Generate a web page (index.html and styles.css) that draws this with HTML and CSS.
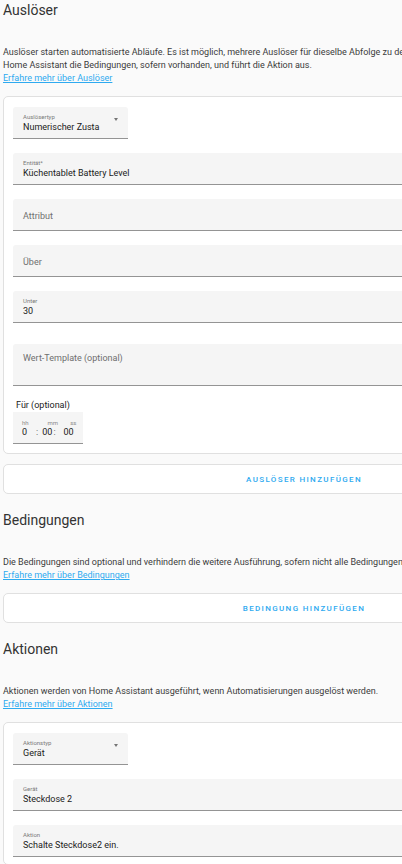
FILE: index.html
```html
<!DOCTYPE html>
<html lang="de">
<head>
<meta charset="utf-8">
<title>Automation</title>
<link rel="stylesheet" href="styles.css">
</head>
<body>
<div class="page">
  <section class="section first">
    <h2 class="title">Auslöser</h2>
    <p class="intro">Auslöser starten automatisierte Abläufe. Es ist möglich, mehrere Auslöser für dieselbe Abfolge zu definieren. Wenn ein Auslöser auslöst, überprüft<br>Home Assistant die Bedingungen, sofern vorhanden, und führt die Aktion aus.<br><a href="#" class="link">Erfahre mehr über Auslöser</a></p>
    <div class="card">
      <div class="field select">
        <div class="select-text">
          <span class="label">Auslösertyp</span>
          <span class="value">Numerischer Zusta</span>
        </div>
        <span class="arrow"></span>
      </div>
      <div class="field">
        <span class="label">Entität*</span>
        <span class="value">Küchentablet Battery Level</span>
      </div>
      <div class="field">
        <span class="ph">Attribut</span>
      </div>
      <div class="field">
        <span class="ph">Über</span>
      </div>
      <div class="field">
        <span class="label">Unter</span>
        <span class="value">30</span>
      </div>
      <div class="field area">
        <span class="ph">Wert-Template (optional)</span>
      </div>
      <div class="duration-block">
        <div class="dur-title">Für (optional)</div>
        <div class="duration">
          <div class="dur-row units">
            <span class="du hh">hh</span><span class="du mm">mm</span><span class="du ss">ss</span>
          </div>
          <div class="dur-row vals">
            <span class="dv h">0</span><span class="dc c1">:</span><span class="dv m">00</span><span class="dc c2">:</span><span class="dv s">00</span>
          </div>
        </div>
      </div>
    </div>
    <div class="card button-card"><span class="btn">Auslöser hinzufügen</span></div>
  </section>

  <section class="section">
    <h2 class="title">Bedingungen</h2>
    <p class="intro">Die Bedingungen sind optional und verhindern die weitere Ausführung, sofern nicht alle Bedingungen erfüllt sind.<br><a href="#" class="link">Erfahre mehr über Bedingungen</a></p>
    <div class="card button-card"><span class="btn">Bedingung hinzufügen</span></div>
  </section>

  <section class="section">
    <h2 class="title">Aktionen</h2>
    <p class="intro">Aktionen werden von Home Assistant ausgeführt, wenn Automatisierungen ausgelöst werden.<br><a href="#" class="link">Erfahre mehr über Aktionen</a></p>
    <div class="card last">
      <div class="field select">
        <div class="select-text">
          <span class="label">Aktionstyp</span>
          <span class="value">Gerät</span>
        </div>
        <span class="arrow"></span>
      </div>
      <div class="field">
        <span class="label">Gerät</span>
        <span class="value">Steckdose 2</span>
      </div>
      <div class="field">
        <span class="label">Aktion</span>
        <span class="value">Schalte Steckdose2 ein.</span>
      </div>
    </div>
  </section>
</div>
</body>
</html>
```

FILE: styles.css
```css
html, body {
  margin: 0;
  padding: 0;
  background: #fafafa;
  overflow: hidden;
}
body {
  font-family: Roboto, "Liberation Sans", sans-serif;
  color: #212121;
}
.page {
  width: 602px;
  padding-left: 3px;
}
.section {
  padding-top: 16px;
}
.section.first {
  padding-top: 0;
}
.title {
  margin: 0;
  font-size: 14px;
  line-height: 20px;
  font-weight: 400;
  color: #333;
}
.intro {
  margin: 26px 0 11px;
  font-size: 9px;
  line-height: 13px;
  white-space: nowrap;
  color: #3a3a3a;
}
.link {
  color: #2eaaf0;
  text-decoration: underline;
  text-underline-offset: 1px;
}
.card {
  background: #fff;
  border: 1px solid #e0e0e0;
  border-radius: 5px;
  box-sizing: border-box;
  padding: 10px 9px 9px;
  display: flex;
  flex-direction: column;
  gap: 14px;
}
.card.last {
  padding-bottom: 7px;
}
.field {
  background: #f5f5f5;
  border-bottom: 1px solid #949494;
  border-radius: 3px 3px 0 0;
  height: 32px;
  box-sizing: border-box;
  padding: 0 10px;
  display: flex;
  flex-direction: column;
  justify-content: center;
}
.label {
  font-size: 6px;
  line-height: 8px;
  color: #7a7a7a;
}
.value {
  font-size: 9px;
  line-height: 12px;
  color: #212121;
}
.ph {
  font-size: 9px;
  line-height: 12px;
  color: #6f6f6f;
  padding-top: 2px;
}
.field.select {
  width: 115px;
  flex-direction: row;
  align-items: center;
  justify-content: space-between;
  padding-right: 10px;
}
.select-text {
  display: flex;
  flex-direction: column;
  padding-top: 1px;
}
.arrow {
  width: 0;
  height: 0;
  border-left: 2.5px solid transparent;
  border-right: 2.5px solid transparent;
  border-top: 3px solid #757575;
  margin-bottom: 7px;
}
.field.area {
  height: 42px;
  margin-top: 7px;
  justify-content: flex-start;
  padding-top: 8px;
}
.field.area .ph {
  padding-top: 0;
}
.duration-block {
  margin-top: -1px;
  display: flex;
  flex-direction: column;
}
.dur-title {
  font-size: 9px;
  line-height: 12px;
  padding-left: 3px;
  margin-bottom: 1px;
  color: #212121;
}
.duration {
  width: 70px;
  height: 32px;
  box-sizing: border-box;
  background: #f5f5f5;
  border-bottom: 1px solid #949494;
  display: flex;
  flex-direction: column;
  justify-content: center;
}
.units {
  display: flex;
  height: 9px;
}
.du {
  font-size: 6px;
  line-height: 9px;
  color: #8a8a8a;
}
.hh { margin-left: 9px; }
.mm { margin-left: 19px; }
.ss { margin-left: 12px; }
.vals {
  display: flex;
  height: 11px;
  align-items: baseline;
}
.dv {
  font-size: 9px;
  line-height: 11px;
  color: #212121;
}
.dc {
  font-size: 9px;
  line-height: 11px;
  color: #555;
}
.h { margin-left: 9px; }
.c1 { margin-left: 9px; }
.m { margin-left: 4px; }
.c2 { margin-left: 1px; }
.s { margin-left: 8px; }
.button-card {
  margin-top: 10px;
  height: 30px;
  padding: 0;
  align-items: center;
  justify-content: center;
}
.section .intro + .button-card {
  margin-top: 0;
}
.btn {
  color: #2eaaf0;
  font-size: 8px;
  font-weight: 500;
  letter-spacing: 1.35px;
  text-transform: uppercase;
}
```
